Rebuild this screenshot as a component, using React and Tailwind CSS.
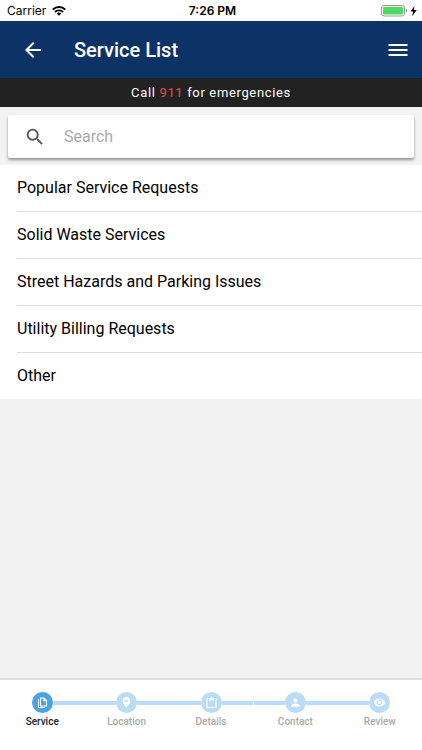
import { MdArrowBack, MdLocationOn, MdPerson, MdRemoveRedEye, MdSearch } from "react-icons/md";

const services = [
  "Popular Service Requests",
  "Solid Waste Services",
  "Street Hazards and Parking Issues",
  "Utility Billing Requests",
  "Other",
];

function MenuIcon() {
  return (
    <svg viewBox="0 0 20 14" className="h-3.5 w-5" fill="currentColor" aria-hidden="true">
      <path d="M.5 1h19v2H.5zM.5 6h19v2H.5zM.5 11h19v2H.5z" />
    </svg>
  );
}

function PagesIcon() {
  return (
    <svg viewBox="0 0 13 13" className="size-[13px]" fill="none" stroke="currentColor" aria-hidden="true">
      <path d="M4.500 2h3.500L10.500 4.500v5.500h-6z" strokeWidth="1.100" />
      <path d="M7.500 2v3h3z" fill="currentColor" strokeWidth=".5" />
      <path d="M2.500 3v8.500h6.500" strokeWidth="1" />
    </svg>
  );
}

function ClipboardIcon() {
  return (
    <svg viewBox="0 0 13 13" className="size-[13px]" fill="none" stroke="currentColor" aria-hidden="true">
      <rect x="2" y="2.500" width="9" height="9" rx=".6" strokeWidth="1.100" />
      <path d="M4 2h1.300a1.200 1.200 0 0 1 2.400 0H9v2.400H4z" fill="currentColor" stroke="none" />
    </svg>
  );
}

const steps = [
  { label: "Service", icon: <PagesIcon />, active: true },
  { label: "Location", icon: <MdLocationOn className="size-[13px]" /> },
  { label: "Details", icon: <ClipboardIcon /> },
  { label: "Contact", icon: <MdPerson className="size-[13px]" />, seam: true },
  { label: "Review", icon: <MdRemoveRedEye className="size-[13px]" /> },
];

function StatusBar() {
  return (
    <div className="grid h-[21px] grid-cols-3 items-center bg-white pr-1 pl-[7px] text-xs leading-5 text-black font-['Inter','Liberation_Sans',sans-serif]">
      <div className="flex items-center gap-1.5">
        <span>Carrier</span>
        <svg viewBox="0 0 14 10" className="h-2.5 w-3.5" fill="none" stroke="currentColor" aria-label="Wi-Fi">
          <path d="M.7 3.6a9 9 0 0 1 12.6 0" strokeWidth="2" />
          <path d="M2.9 6a5.9 5.9 0 0 1 8.2 0" strokeWidth="1.8" />
          <path d="M7 9.8 4.8 7.6a3.2 3.2 0 0 1 4.4 0z" fill="currentColor" stroke="none" />
        </svg>
      </div>
      <span className="text-center font-semibold">7:26 PM</span>
      <svg viewBox="0 0 37 12" className="h-3 w-[37px] justify-self-end" aria-label="Battery charging">
        <rect x=".5" y=".5" width="23" height="10.500" rx="2.500" fill="none" stroke="#999" />
        <rect x="2" y="2" width="20" height="7.500" rx="1.200" fill="#4cd964" />
        <path d="M25 4v3.500q1.300-.6 1.300-1.750T25 4z" fill="#999" />
        <path d="M33.500 1 29.500 6.500h2.700L31.200 11.200l4.600-6.200h-2.900z" fill="#000" />
      </svg>
    </div>
  );
}

export default function App() {
  return (
    <div className="flex min-h-screen flex-col bg-[#f2f2f2] font-['Roboto','Liberation_Sans',sans-serif] text-black">
      <StatusBar />
      <header className="flex h-[57px] items-center bg-[#0d3266] pr-3.5 pl-[21px] text-white">
        <button type="button" aria-label="Back">
          <MdArrowBack className="size-6" />
        </button>
        <h1 className="ml-[29px] flex-1 text-xl leading-6 font-medium">Service List</h1>
        <button type="button" aria-label="Menu">
          <MenuIcon />
        </button>
      </header>
      <p className="h-[29px] bg-[#222] text-center text-[13px] leading-[29px] tracking-wider text-white">
        Call <span className="text-[#f04a40]">911</span> for emergencies
      </p>

      <main className="flex-1">
        <form role="search" className="px-2 pt-2 pb-[7px]">
          <label className="flex h-[43px] items-center rounded-xs bg-white pl-4 shadow-[0_2px_3px_rgba(0,0,0,0.4)]">
            <MdSearch className="size-[22px] text-[#555]" />
            <input
              type="search"
              aria-label="Search"
              placeholder="Search"
              className="ml-[18px] min-w-0 flex-1 bg-transparent text-base outline-none placeholder:text-[#aaa]"
            />
          </label>
        </form>
        <ul className="bg-white pl-[17px]">
          {services.map((name) => (
            <li key={name} className="border-b border-[#dedede] last:border-b-0">
              <button type="button" className="block h-[46px] w-full text-left text-base">
                {name}
              </button>
            </li>
          ))}
        </ul>
      </main>

      <footer className="h-[72px] border-t-2 border-[#e0e0e0] bg-white pt-3">
        <ol className="grid grid-cols-5">
          {steps.map((step, i) => (
            <li key={step.label}>
              <button type="button" className="block w-full" aria-current={step.active ? "step" : undefined}>
                <span className="flex items-center">
                  <span
                    className={`h-1 flex-1 ${i === 0 ? "" : "bg-[#bbdcf6]"} ${step.seam ? "border-l border-[#e4f2fc]" : ""}`}
                  />
                  <span
                    className={`flex size-[21px] items-center justify-center rounded-full text-white ${step.active ? "bg-[#4ba3e3]" : "bg-[#bbdcf6]"}`}
                  >
                    {step.icon}
                  </span>
                  <span className={`h-1 flex-1 ${i === steps.length - 1 ? "" : "bg-[#bbdcf6]"}`} />
                </span>
                <span
                  className={`mt-px block text-center text-[10px] leading-4 font-medium ${step.active ? "text-[#222]" : "text-[#aaa]"}`}
                >
                  {step.label}
                </span>
              </button>
            </li>
          ))}
        </ol>
      </footer>
    </div>
  );
}
